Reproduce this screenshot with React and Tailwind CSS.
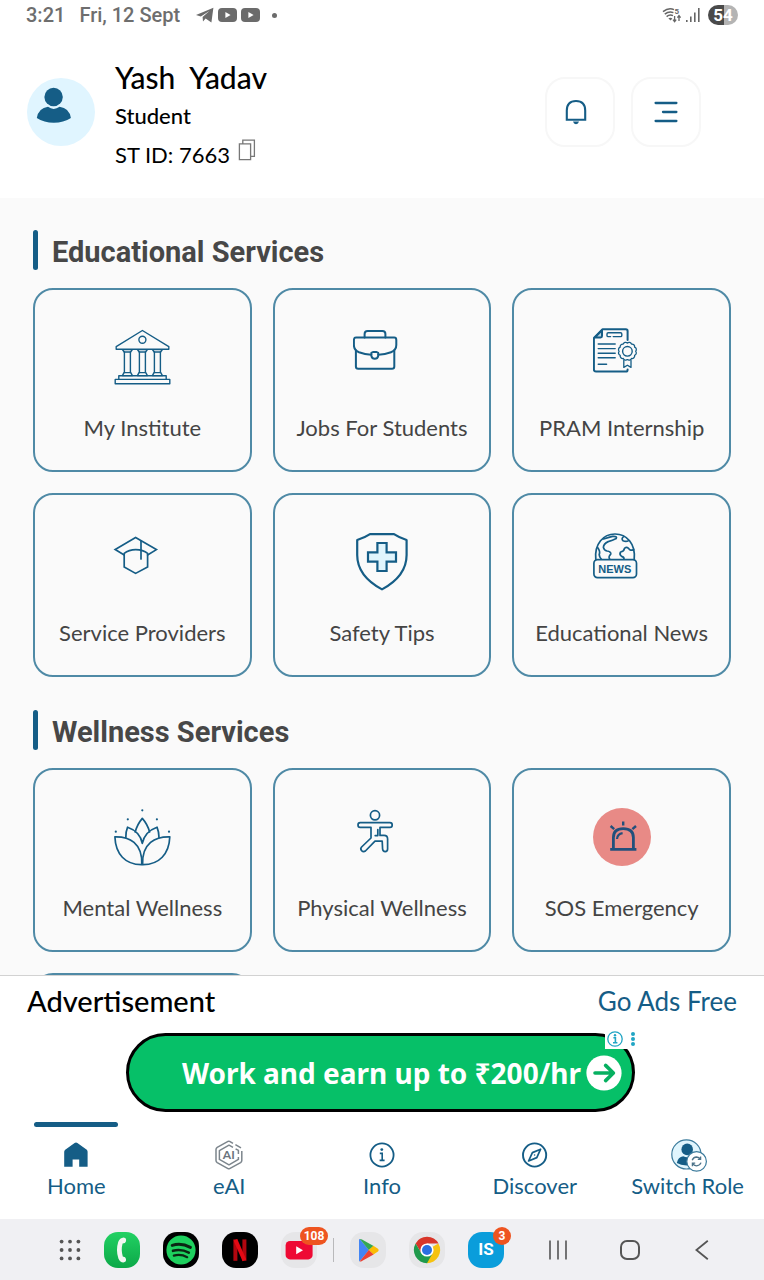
import React from "react";

const line = "#155d86";

function Icon({ children, width = 2 }) {
  return (
    <svg viewBox="0 0 58 58" className="size-[58px]" fill="none" stroke={line} strokeWidth={width} strokeLinecap="round" strokeLinejoin="round" aria-hidden="true">
      {children}
    </svg>
  );
}

function InstituteIcon() {
  return (
    <Icon width={1.4}>
      <path d="M29.4 2.5 L3.2 18.6 V21.3 H55.8 V18.6 Z" />
      <circle cx="29.4" cy="11.7" r="3.5" />
      {[14.4, 29.4, 44.4].map((x) => (
        <g key={x}>
          <path d={`M${x - 5} 21.6 H${x + 5} L${x + 3.2} 24 H${x - 3.2} Z`} />
          <path d={`M${x - 3} 24 V44.6 M${x + 3} 24 V44.6`} />
          <path d={`M${x - 3.4} 44.6 H${x + 3.4} L${x + 5} 47.6 H${x - 5} Z`} />
        </g>
      ))}
      <path d="M5.8 47.7 H53.2 V51.4 H5.8 Z M2.2 51.4 H56.8 V55.8 H2.2 Z" />
    </Icon>
  );
}

function BriefcaseIcon() {
  return (
    <Icon width={2}>
      <path d="M11.6 9.4 V6 Q11.6 3 14.6 3 H29.4 Q32.4 3 32.4 6 V9.4" />
      <path d="M3 9.6 H41.2 Q43.3 9.6 43.3 12 V17 Q43.3 22.2 38 24.2 Q32 26.4 25.4 26.8 M18.2 26.8 Q12 26.4 6 24.2 Q0.9 22.2 0.9 17 V12 Q0.9 9.6 3 9.6" />
      <path d="M2.9 22.6 V38.4 Q2.9 40.7 5.2 40.7 H39 Q41.3 40.7 41.3 38.4 V22.6" />
      <path d="M18.4 24.9 L20 24 H23.6 L25.2 24.9 V28 Q24.6 30.8 21.8 30.8 Q19 30.8 18.4 28 Z" />
    </Icon>
  );
}

function CertificateIcon() {
  const petals = Array.from({ length: 12 }, (_, i) => {
    const a = (i * Math.PI) / 6;
    return [34.4 + 8.3 * Math.cos(a), 23.3 + 8.3 * Math.sin(a)];
  });
  const seal =
    petals.map(([x, y], i) => `${i ? "" : `M${x.toFixed(1)} ${y.toFixed(1)}`} A2.6 2.6 0 0 1 ${petals[(i + 1) % 12].map((n) => n.toFixed(1)).join(" ")}`).join(" ") + " Z";
  return (
    <Icon width={2}>
      <path d="M34.6 12 V3 Q34.6 1.2 32.8 1.2 H9.6 L0.9 10 V41.6 Q0.9 43.6 2.9 43.6 H32.8 Q34.6 43.6 34.6 41.4" />
      <path d="M2 9.4 L9 2.2 V8 Q9 9.4 7.6 9.4 Z" fill="#b9d3e0" />
      <path strokeWidth="1.4" d="M17.6 8.6 H15.2 Q14 8.6 14 7.4 V6 Q14 4.8 15.2 4.8 H27.6 Q28.8 4.8 28.8 6 V7.4 Q28.8 8.6 27.6 8.6 H20.2" />
      <path strokeWidth="1.4" d="M5.2 16 H22.2 M5.2 20.6 H22.2 M5.2 25.2 H22.2 M5.2 29.8 H22.2 M5.2 36.3 H13.6" />
      <path strokeWidth="1.3" d={seal} />
      <circle cx="34.4" cy="23.3" r="4.8" strokeWidth="1.4" />
      <path strokeWidth="1.3" d="M30.8 32.4 V39.4 L34.4 37.2 L38 39.4 V32.4" />
    </Icon>
  );
}

function GraduateIcon() {
  return (
    <Icon width={1.7}>
      <path strokeLinejoin="miter" d="M11.2 22 L2.2 16.6 L22.6 4.6 L43.4 16.6 L34.6 22" />
      <path strokeLinejoin="miter" d="M11.2 20.4 V34 L22.6 40.4 L34.6 34 V20.4 M11.2 20.4 Q15.8 16.6 22.8 16.6 Q30 16.6 34.6 20.4" />
      <path d="M28 8.2 V26" />
    </Icon>
  );
}

function ShieldIcon() {
  return (
    <Icon width={2.2}>
      <path d="M17 1.2 H41 Q46 4.6 53.6 7 V22 Q53.6 43 29 56.4 Q4.2 43 4.2 22 V7 Q12 4.6 17 1.2 Z" />
      <path strokeLinejoin="miter" fill="#e0f5fd" d="M24.4 10 H33.6 V19.4 H43 V28.6 H33.6 V38 H24.4 V28.6 H15 V19.4 H24.4 Z" />
    </Icon>
  );
}

function NewsIcon() {
  return (
    <Icon width={1.7}>
      <path d="M2.8 26.4 C1.2 10.6 10.6 1 22 1 C33.6 1 42.8 10.6 41.2 26.4" />
      <path d="M10.6 6 Q16.6 4.2 19.6 3.4 Q24.6 3 23.2 5.6 Q19.6 7.6 15.2 8.6 Q10.6 10.6 10.4 14.4 Q11 17.2 14 18 Q18.2 18.6 17.8 21 Q15.2 23.6 16.6 26" />
      <path d="M4.6 14.6 Q7.6 18.6 6.2 21.6 Q6.4 24 8.2 26" />
      <path d="M30.6 3.6 Q28 5.4 30 7.8 Q33.2 9.2 35.6 7.6" />
      <path d="M40.6 16.4 Q37.2 18.4 35.6 15.4 Q33 13.4 31.4 15.6 Q31 18.4 27.6 19 Q26 21.6 28.6 23.4 Q31.2 24 31 26" />
      <rect x="0.9" y="26.6" width="42.6" height="18" rx="3.6" />
      <text x="21.8" y="39.6" textAnchor="middle" fill={line} stroke="none" className="font-['Liberation_Sans',sans-serif] text-[11px] font-bold">NEWS</text>
    </Icon>
  );
}

function LotusIcon() {
  return (
    <Icon width={1.7}>
      <path d="M22.2 24 Q24.2 16.4 29.3 10.4 Q34.6 16.4 36.6 24" />
      <path d="M12.8 29.6 Q12.6 24 14.6 19.2 Q27.2 23.6 29.3 35.4 Q31.6 23.6 44 19.2 Q46 24 46 29.6" />
      <path d="M1.9 28.8 C16.2 28.4 29.6 35 28.8 56.6 C12.2 56.8 2.5 46 1.9 28.8 Z" />
      <path d="M56.8 28.8 C42.6 28.4 28.8 35 29.6 56.6 C46.2 56.8 56.2 46 56.8 28.8 Z" />
      <g fill={line} stroke="none">
        <circle cx="29.3" cy="2.3" r="1.1" />
        <circle cx="14.8" cy="11.3" r="1.1" />
        <circle cx="43.9" cy="11.3" r="1.1" />
        <circle cx="2.8" cy="23.7" r="1.1" />
        <circle cx="56" cy="23.7" r="1.1" />
      </g>
    </Icon>
  );
}

function YogaIcon() {
  return (
    <Icon width={1.7}>
      <circle cx="22" cy="7.3" r="4.6" />
      <path d="M7.2 14.6 H37 Q39.2 14.6 39.2 17 Q39.2 19.4 37 19.4 H27 V27.4 H31 Q34.6 27.4 34.6 31 V41 Q34.6 43.6 32.2 43.6 Q29.8 43.6 29.6 41 L29.2 33.2 H22 L12.4 43 Q10.4 44.4 8.6 42.6 Q7 40.8 8.6 39 L18 30 V19.4 H7.2 Q5 19.4 5 17 Q5 14.6 7.2 14.6 Z" />
      <path d="M24.8 21.6 V27.6 H22.2" />
    </Icon>
  );
}

function SirenIcon() {
  return (
    <Icon width={2.8}>
      <circle cx="29" cy="29" r="29" fill="#e88a86" stroke="none" />
      <g strokeLinecap="butt" stroke="#22507c">
        <path d="M20.4 41 V29.6 Q20.4 20.6 30.2 20.6 Q40.4 20.6 40.4 29.6 V41 M17.2 41.4 H43.4" />
        <path strokeWidth="2.2" d="M24 31 Q24.4 26 29.6 25.2" />
        <path strokeWidth="2.4" d="M30.2 13.4 V17.6 M17.6 18 L21.2 21.2 M43 18 L39.4 21.2" />
      </g>
    </Icon>
  );
}

function Card({ icon, label }) {
  return (
    <button type="button" className="flex h-[184px] min-w-0 flex-col items-center rounded-[20px] border-2 border-[#4f8aa6] pt-[38px]">
      {icon}
      <span className="mt-7 text-[22px] leading-7 whitespace-nowrap text-[#444444]">{label}</span>
    </button>
  );
}

function Section({ title, items }) {
  return (
    <section>
      <div className="flex h-10 items-center gap-[14px]">
        <span className="h-full w-[5px] rounded-sm bg-[#155d86]" />
        <h2 className="pt-1 font-['Roboto',sans-serif] text-[29px] leading-9 font-bold text-[#474747]">{title}</h2>
      </div>
      <div className="mt-[18px] grid grid-cols-3 gap-[21px]">
        {items.map((item) => (
          <Card key={item.label} {...item} />
        ))}
      </div>
    </section>
  );
}

const educational = [
  { label: "My Institute", icon: <InstituteIcon /> },
  { label: "Jobs For Students", icon: <BriefcaseIcon /> },
  { label: "PRAM Internship", icon: <CertificateIcon /> },
  { label: "Service Providers", icon: <GraduateIcon /> },
  { label: "Safety Tips", icon: <ShieldIcon /> },
  { label: "Educational News", icon: <NewsIcon /> },
];

const wellness = [
  { label: "Mental Wellness", icon: <LotusIcon /> },
  { label: "Physical Wellness", icon: <YogaIcon /> },
  { label: "SOS Emergency", icon: <SirenIcon /> },
  { label: "", icon: null },
];

function VideoGlyph() {
  return (
    <svg viewBox="0 0 19 14" className="h-[14px] w-[19px]" aria-hidden="true">
      <rect width="19" height="14" rx="4" fill="#6b6b6b" />
      <path d="M7.4 4 L12.6 7 L7.4 10 Z" fill="#fff" />
    </svg>
  );
}

function StatusBar() {
  return (
    <div className="flex h-[30px] shrink-0 items-center justify-between pr-[26px] pl-[26px] font-['Roboto',sans-serif] text-[20px] leading-6 font-medium text-[#6e6e6e]">
      <div className="flex items-center gap-[14px]">
        <span>3:21</span>
        <span>Fri, 12 Sept</span>
        <div className="ml-0.5 flex items-center gap-1">
          <svg viewBox="0 0 18 16" className="h-4 w-[18px]" fill="#6b6b6b" aria-hidden="true">
            <path d="M0 8 L17.4 0.8 L15.4 15.4 L9.6 11.6 L7 14.4 L6.6 10 L13.4 4 L4.8 9.4 Z" />
          </svg>
          <VideoGlyph />
          <VideoGlyph />
          <span className="ml-2 size-[5px] rounded-full bg-[#6b6b6b]" />
        </div>
      </div>
      <div className="flex items-center gap-1">
        <svg viewBox="0 0 20 16" className="h-4 w-5" fill="none" stroke="#666" strokeWidth="1.5" aria-hidden="true">
          <path d="M1 4.6 Q6.6 0.2 12 2.6 M2.8 7.2 Q7 3.8 11.4 5.6 M4.6 9.6 Q7.6 7.2 11 8.6" />
          <path d="M6.4 11.4 Q8.4 10.2 10.4 11.4 L8.6 13.6 Z" fill="#666" stroke="none" />
          <path d="M12.6 9 V14.4 M11 12.6 L12.6 14.6 L14.2 12.6 M17 14 V8.8 M15.4 10.6 L17 8.6 L18.6 10.6" strokeWidth="1.3" />
          <text x="12.4" y="7.4" fill="#666" stroke="none" className="text-[8px] font-bold">5</text>
        </svg>
        <svg viewBox="0 0 14 14" className="h-[14px] w-[14px]" fill="#666" aria-hidden="true">
          <path d="M0 12 H1.6 V14 H0 Z M4 8.4 H5.6 V14 H4 Z M8 4.4 H9.6 V14 H8 Z M12 0 H13.6 V14 H12 Z" />
        </svg>
        <span className="ml-1 flex h-5 w-[30px] items-center justify-center rounded-full bg-linear-to-r from-[#4a4a4a] from-52% to-[#b4b4b4] to-52% text-[17px] leading-5 font-bold text-white">54</span>
      </div>
    </div>
  );
}

function Header() {
  return (
    <header className="flex h-[168px] shrink-0 items-start justify-between pt-7 pr-[63px] pl-[27px]">
      <div className="flex gap-5">
        <div className="mt-5 size-[68px] rounded-full bg-[#e0f5ff]">
          <svg viewBox="0 0 68 68" className="size-full" fill="#155d86" aria-hidden="true">
            <circle cx="26.6" cy="19" r="9.2" />
            <path d="M9.8 40 Q11.6 30 21 28.8 Q26.6 33 32.6 28.8 Q42.2 30 43.9 40 Q36.6 44.8 26.8 44.8 Q17 44.8 9.8 40 Z" />
          </svg>
        </div>
        <div className="text-black">
          <h1 className="text-[30px] leading-[38px] font-medium whitespace-pre">Yash  Yadav</h1>
          <p className="text-[22px] leading-10 font-medium">Student</p>
          <div className="flex items-start gap-2 text-[22px] leading-[38px]">
            <p>ST ID: 7663</p>
            <button type="button" aria-label="Copy ID" className="pt-[3px]">
              <svg viewBox="0 0 18 22" className="h-[22px] w-[18px]" fill="none" stroke="#777" strokeWidth="1.3" aria-hidden="true">
                <path d="M1.4 4.8 H12.6 V20.6 H1.4 Z M4.8 4.6 V1.2 H16.4 V17.4 H13" />
              </svg>
            </button>
          </div>
        </div>
      </div>
      <div className="mt-[19px] flex gap-4">
        <button type="button" aria-label="Notifications" className="grid size-[70px] place-items-center rounded-[20px] border-2 border-[#f7f7f7] pr-2">
          <svg viewBox="0 0 24 26" className="h-[26px] w-6" fill="none" stroke="#155d86" strokeWidth="2.1" aria-hidden="true">
            <path d="M2.8 20.8 V11.6 Q2.8 2 12 2 Q21.2 2 21.2 11.6 V20.8 Z" />
            <path d="M9 22.6 H15 Q14.4 25.2 12 25.2 Q9.6 25.2 9 22.6 Z" fill="#155d86" stroke="none" />
          </svg>
        </button>
        <button type="button" aria-label="Menu" className="grid size-[70px] place-items-center rounded-[20px] border-2 border-[#f7f7f7]">
          <svg viewBox="0 0 24 22" className="h-[22px] w-6" fill="none" stroke="#155d86" strokeWidth="2.3" strokeLinecap="round" aria-hidden="true">
            <path d="M1.6 2 H22.4 M9 11 H22.4 M1.6 20 H22.4" />
          </svg>
        </button>
      </div>
    </header>
  );
}

function Advertisement() {
  return (
    <section className="shrink-0 border-t border-[#d2d2d2] bg-white">
      <div className="flex h-[50px] items-center justify-between pr-[27px] pl-[27px]">
        <h2 className="text-[29px] leading-9 font-medium text-black">Advertisement</h2>
        <a href="#ads-free" className="text-[26px] leading-9 text-[#155d86]">Go Ads Free</a>
      </div>
      <div className="flex h-[96px] justify-center pr-[3px] pt-[7px]">
        <div className="relative h-[79px] w-[509px]">
          <a href="#offer" className="flex h-full items-center justify-end gap-[5px] rounded-full border-[3px] border-black bg-[#06c068] pr-[10px] font-['Noto_Sans',sans-serif] text-[28px] leading-9 font-bold whitespace-nowrap text-white">
            Work and earn up to ₹200/hr
            <svg viewBox="0 0 36 36" className="size-9" fill="none" aria-hidden="true">
              <circle cx="18" cy="18" r="17.6" fill="#fff" />
              <path d="M9 18 H27 M19.6 10.4 L27.4 18 L19.6 25.6" stroke="#06b060" strokeWidth="3.6" strokeLinecap="round" strokeLinejoin="round" />
            </svg>
          </a>
          <div className="absolute -top-1 -right-1 flex h-5 items-center gap-2 bg-white pr-1 pl-0.5">
            <svg viewBox="0 0 16 16" className="size-4" fill="none" stroke="#21a5c4" strokeWidth="1.3" role="img" aria-label="Ad information">
              <circle cx="8" cy="8" r="7.2" />
              <path d="M6.4 6.8 H8.4 V11.6 M6 11.8 H10.4" strokeWidth="1.6" />
              <circle cx="8" cy="4.2" r="1.2" fill="#21a5c4" stroke="none" />
            </svg>
            <svg viewBox="0 0 4 16" className="h-4 w-1" fill="#21a5c4" aria-hidden="true">
              <circle cx="2" cy="3" r="2" />
              <circle cx="2" cy="8" r="2" />
              <circle cx="2" cy="13" r="2" />
            </svg>
          </div>
        </div>
      </div>
    </section>
  );
}

function HomeIcon() {
  return (
    <svg viewBox="0 0 30 32" className="h-8 w-[30px]" fill="#155d86" aria-hidden="true">
      <path d="M3.2 12.8 Q3.2 11.6 4.2 10.8 L13.6 4 Q15 3.2 16.4 4 L25.8 10.8 Q26.6 11.6 26.6 12.8 V27.8 H18.2 V20.4 H11.6 V27.8 H3.2 Z" />
    </svg>
  );
}

function AiIcon() {
  return (
    <svg viewBox="0 0 30 32" className="h-8 w-[30px]" fill="none" stroke="#7c858c" strokeWidth="1.5" strokeLinejoin="round" aria-hidden="true">
      <path d="M19 4.4 L15.6 2.4 Q14.8 2 14 2.4 L3.2 8.4 Q2 9.2 2 10.4 V21.6 Q2 22.8 3.2 23.6 L14 29.6 Q14.8 30 15.6 29.6 L26.6 23.6 Q27.8 22.8 27.8 21.6 V12 M21.4 5.6 L27 8.8" />
      <path d="M19 8.4 L15 6.2 L5.4 11.6 V20.4 L15 25.8 L24.4 20.4 V18 M24.4 15 V11.4 L21.6 9.8" />
      <text x="14.8" y="20" textAnchor="middle" fill="#6b747c" stroke="none" className="font-['Lato',sans-serif] text-[12px] font-bold">AI</text>
    </svg>
  );
}

function InfoIcon() {
  return (
    <svg viewBox="0 0 30 32" className="h-8 w-[30px]" fill="none" stroke="#155d86" strokeWidth="1.8" aria-hidden="true">
      <circle cx="15" cy="16" r="11.6" />
      <path d="M12.8 14.4 H15.2 V21.2 M12.6 21.4 H17.6" strokeWidth="1.6" />
      <circle cx="14.8" cy="10.6" r="1.4" fill="#155d86" stroke="none" />
    </svg>
  );
}

function CompassIcon() {
  return (
    <svg viewBox="0 0 30 32" className="h-8 w-[30px]" fill="none" stroke="#155d86" strokeWidth="1.9" strokeLinejoin="round" aria-hidden="true">
      <circle cx="14.6" cy="16" r="11.6" />
      <path d="M20.6 10.2 L12.4 13.6 L8.6 22 L16.8 18.6 Z" strokeWidth="1.7" />
      <circle cx="14.6" cy="16" r="0.8" fill="#155d86" stroke="none" />
    </svg>
  );
}

function SwitchIcon() {
  return (
    <svg viewBox="0 0 38 34" className="h-[34px] w-[38px]" aria-hidden="true">
      <circle cx="17.4" cy="16.4" r="14.6" fill="#e0f5fd" stroke="#3c7b9c" strokeWidth="1.2" />
      <circle cx="18.2" cy="11.4" r="5.8" fill="#155d86" />
      <path d="M7.8 25 Q9 18.8 14.2 18.2 Q18.2 20.4 22.2 18.2 Q25.6 19 27.6 23.4 Q21.6 27.4 17.6 27.4 Q11.6 27.4 7.8 25 Z" fill="#155d86" />
      <circle cx="27.6" cy="23.4" r="9.8" fill="#fff" stroke="#3c7b9c" strokeWidth="1.2" />
      <g fill="none" stroke="#4d7389" strokeWidth="1.3">
        <path d="M23.2 22.2 Q24.2 19.2 27.6 19 Q30 19.2 31.4 21 M31.6 18.4 V21.4 H28.8" />
        <path d="M32 24.6 Q31 27.6 27.4 27.8 Q25 27.6 23.6 25.6 M23.4 28.2 V25.2 H26.2" />
      </g>
    </svg>
  );
}

const tabs = [
  { label: "Home", icon: <HomeIcon />, active: true },
  { label: "eAI", icon: <AiIcon /> },
  { label: "Info", icon: <InfoIcon /> },
  { label: "Discover", icon: <CompassIcon /> },
  { label: "Switch Role", icon: <SwitchIcon /> },
];

function TabBar() {
  return (
    <nav className="grid h-[97px] shrink-0 grid-cols-5 bg-white">
      {tabs.map(({ label, icon, active }) => (
        <a key={label} href={`#${label.toLowerCase().replace(" ", "-")}`} aria-current={active ? "page" : undefined} className="flex flex-col items-center text-[#155d86]">
          <span className={active ? "h-[5px] w-[84px] rounded-full bg-[#155d86]" : "h-[5px] w-[84px]"} />
          <span className="mt-[11px] flex h-[34px] items-center">{icon}</span>
          <span className="text-[22px] leading-7 whitespace-nowrap">{label}</span>
        </a>
      ))}
    </nav>
  );
}

function PhoneApp() {
  return (
    <svg viewBox="0 0 36 36" className="size-9" aria-hidden="true">
      <defs>
        <linearGradient id="phone" x1="0" y1="0" x2="0" y2="1">
          <stop offset="0" stopColor="#22d163" />
          <stop offset="1" stopColor="#0ca848" />
        </linearGradient>
      </defs>
      <rect width="36" height="36" rx="14" fill="url(#phone)" />
      <path d="M19.8 5.6 Q22.6 6 22 9.2 Q21.6 11.4 18.6 11.6 Q16.8 18 18.8 24.4 Q21.8 24.8 22 27 Q22.4 30.2 19.4 30.4 Q16 30.2 14.4 26.4 Q11.6 18.4 14.2 10 Q15.6 6 19.8 5.6 Z" fill="#f2f6f2" />
    </svg>
  );
}

function SpotifyApp() {
  return (
    <svg viewBox="0 0 36 36" className="size-9" aria-hidden="true">
      <rect width="36" height="36" rx="14" fill="#000" />
      <circle cx="18" cy="18" r="14.6" fill="#1ed05e" />
      <g fill="none" stroke="#0b2513" strokeLinecap="round">
        <path d="M9.2 13.4 Q18.4 10.6 27.4 15.4" strokeWidth="3" />
        <path d="M10 18.8 Q18 16.6 25.8 20.6" strokeWidth="2.6" />
        <path d="M10.8 23.6 Q18 21.8 24.2 25.2" strokeWidth="2.2" />
      </g>
    </svg>
  );
}

function NetflixApp() {
  return (
    <svg viewBox="0 0 36 36" className="size-9" aria-hidden="true">
      <rect width="36" height="36" rx="14" fill="#000" />
      <rect x="11.4" y="7.4" width="4" height="21.4" fill="#b1060f" />
      <rect x="20.4" y="7.4" width="4" height="21.4" fill="#b1060f" />
      <line x1="13.4" y1="7.8" x2="22.4" y2="28.4" stroke="#e50914" strokeWidth="4" />
    </svg>
  );
}

function YoutubeApp() {
  return (
    <svg viewBox="0 0 36 36" className="size-9" aria-hidden="true">
      <rect width="36" height="36" rx="14" fill="#e6e6e8" />
      <rect x="4.6" y="9" width="27" height="18.4" rx="4.4" fill="#ee0a34" />
      <path d="M15.2 14.2 L22 18.2 L15.2 22.2 Z" fill="#fff" />
    </svg>
  );
}

function PlayApp() {
  return (
    <svg viewBox="0 0 36 36" className="size-9" aria-hidden="true">
      <rect width="36" height="36" rx="14" fill="#e6e6e8" />
      <path d="M9 8 Q9 7.2 9.8 7 L19 18 L9.6 29.4 Q9 29 9 28 Z" fill="#4285f4" />
      <path d="M9.8 7 Q10.8 6.8 12 7.4 L23.6 14 L19 18.2 Z" fill="#34a853" />
      <path d="M23.4 13.8 L27.6 16.4 Q29.6 18 27.6 19.8 L23.4 22.4 L18.6 18 Z" fill="#fbbc04" />
      <path d="M9.6 29.4 Q10.6 29.8 12 29 L23.6 22.4 L18.8 18 Z" fill="#ea4335" />
    </svg>
  );
}

function ChromeApp() {
  return (
    <svg viewBox="0 0 36 36" className="size-9" aria-hidden="true">
      <rect width="36" height="36" rx="14" fill="#e6e6e8" />
      <g transform="translate(18 18)">
        <path d="M0 0 L11.4 -6.6 A13.2 13.2 0 0 1 0 13.2 Z" fill="#f6c210" />
        <path d="M0 -6.4 H11.5 A13.2 13.2 0 0 0 -11.4 -6.6 L-5.6 3.2 Z" fill="#d8362a" />
        <path d="M-11.4 -6.6 L-5.6 3.2 L5.6 3.2 L0 13.2 A13.2 13.2 0 0 1 -11.4 -6.6 Z" fill="#1f9a4c" />
        <circle r="6.6" fill="#fff" />
        <circle r="5" fill="#2a6fe0" />
      </g>
    </svg>
  );
}

function DockApp({ name, badge, wide, children }) {
  return (
    <button type="button" aria-label={name} className="relative size-9">
      {children}
      {badge && (
        <span className={`absolute -top-[5px] flex items-center justify-center rounded-full bg-[#ee5420] font-['Roboto',sans-serif] text-[12px] leading-none font-bold text-white ${wide ? "-right-[11px] h-[18px] w-7" : "-right-[7px] size-[18px]"}`}>
          {badge}
        </span>
      )}
    </button>
  );
}

function Dock() {
  return (
    <footer className="flex h-[61px] shrink-0 items-center justify-between bg-[#f0f0f3] pr-11 pl-[59px]">
      <div className="flex items-center gap-[23px]">
        <button type="button" aria-label="All apps">
          <svg viewBox="0 0 22 22" className="size-[22px]" fill="#555" aria-hidden="true">
            {[2.6, 11, 19.4].map((y) => [2.6, 11, 19.4].map((x) => <circle key={`${x}-${y}`} cx={x} cy={y} r="1.9" />))}
          </svg>
        </button>
        <DockApp name="Phone"><PhoneApp /></DockApp>
        <DockApp name="Spotify"><SpotifyApp /></DockApp>
        <DockApp name="Netflix"><NetflixApp /></DockApp>
        <DockApp name="YouTube" badge="108" wide><YoutubeApp /></DockApp>
      </div>
      <span className="h-6 w-px bg-[#b9b9bb]" />
      <div className="flex items-center gap-[23px]">
        <DockApp name="Play Store"><PlayApp /></DockApp>
        <DockApp name="Chrome"><ChromeApp /></DockApp>
        <DockApp name="IS" badge="3">
          <span className="grid size-9 place-items-center rounded-[14px] bg-[#0a9ddb] font-['Roboto',sans-serif] text-[17px] leading-none font-bold text-white">IS</span>
        </DockApp>
      </div>
      <div className="flex items-center gap-9 pl-5">
        <button type="button" aria-label="Recent apps" className="grid size-9 place-items-center">
          <svg viewBox="0 0 20 20" className="size-5" stroke="#555" strokeWidth="1.6" aria-hidden="true">
            <path d="M2 0.6 V19.4 M10 0.6 V19.4 M18 0.6 V19.4" />
          </svg>
        </button>
        <button type="button" aria-label="Home screen" className="grid size-9 place-items-center">
          <span className="size-5 rounded-[7px] border-2 border-[#555555]" />
        </button>
        <button type="button" aria-label="Back" className="grid size-9 place-items-center">
          <svg viewBox="0 0 14 20" className="h-5 w-[14px]" fill="none" stroke="#555" strokeWidth="1.8" aria-hidden="true">
            <path d="M12.8 0.8 L1.4 10 L12.8 19.2" />
          </svg>
        </button>
      </div>
    </footer>
  );
}

export default function App() {
  return (
    <div className="flex h-screen flex-col overflow-hidden bg-white font-['Lato',sans-serif]">
      <StatusBar />
      <Header />
      <main className="min-h-0 flex-1 space-y-[33px] overflow-hidden bg-[#fafafa] px-[33px] pt-8">
        <Section title="Educational Services" items={educational} />
        <Section title="Wellness Services" items={wellness} />
      </main>
      <Advertisement />
      <TabBar />
      <Dock />
    </div>
  );
}
